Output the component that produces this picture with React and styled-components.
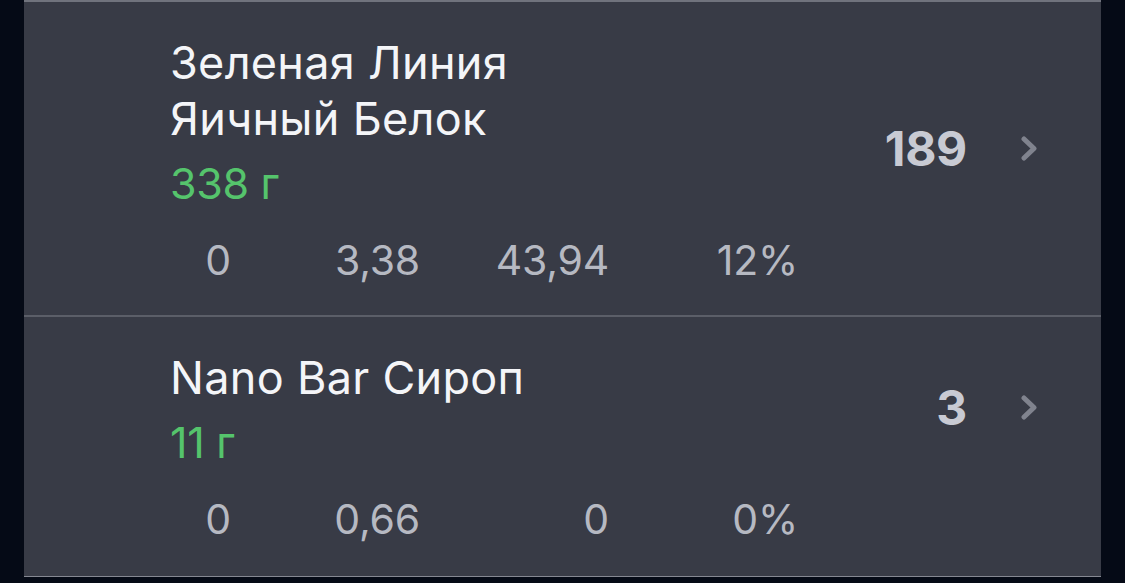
import React from "react";
import styled, { createGlobalStyle } from "styled-components";

const GlobalStyle = createGlobalStyle`
   html, body {
      margin: 0;
      padding: 0;
      background: #050a16;
   }
   body {
      font-family: Inter, "Noto Sans", "Liberation Sans", sans-serif;
      -webkit-font-smoothing: antialiased;
   }
`;

const Page = styled.div`
   width: 1125px;
   height: 583px;
   overflow: hidden;
   background: #050a16;
   padding: 0 24px;
   box-sizing: border-box;
`;

const List = styled.div`
   background: #383b46;
   border-top: 2px solid #70737d;
   border-bottom: 1px solid #858892;
`;

const Row = styled.div`
   display: flex;
   flex-direction: column;
   padding: 33px 0 ${(props) => props.bottom}px;
   & + & {
      border-top: 2px solid #5b5e68;
   }
`;

const Top = styled.div`
   display: flex;
   align-items: flex-end;
   padding: 0 63px 0 146px;
`;

const Info = styled.div`
   flex: 1;
   display: flex;
   flex-direction: column;
`;

const Title = styled.div`
   font-size: 45px;
   line-height: 56px;
   color: #f4f5f8;
   letter-spacing: 0.3px;
`;

const Weight = styled.div`
   margin-top: 8px;
   font-size: 43px;
   line-height: 56px;
   color: #55c46c;
   letter-spacing: -0.3px;
`;

const Value = styled.div`
   height: 120px;
   display: flex;
   align-items: center;
   gap: 54px;
   padding-bottom: 6px;
   box-sizing: border-box;
`;

const Amount = styled.span`
   font-size: 48px;
   font-weight: 700;
   color: #c8cad3;
   letter-spacing: -0.3px;
`;

const Stats = styled.div`
   display: grid;
   grid-template-columns: repeat(4, 189px);
   margin-top: 21px;
   padding-left: 18px;
`;

const Stat = styled.span`
   text-align: right;
   font-size: 41px;
   line-height: 56px;
   color: #b6b9c2;
   letter-spacing: -0.2px;
`;

const Chevron = () => (
   <svg width="17" height="25" viewBox="0 0 17 25">
      <polyline
         points="3,3 13,12.5 3,22"
         fill="none"
         stroke="#80838e"
         strokeWidth="5"
         strokeLinecap="round"
         strokeLinejoin="round"
      />
   </svg>
);

const items = [
   {
      title: ["Зеленая Линия", "Яичный Белок"],
      weight: "338 г",
      amount: "189",
      stats: ["0", "3,38", "43,94", "12%"],
      bottom: 27,
   },
   {
      title: ["Nano Bar Сироп"],
      weight: "11 г",
      amount: "3",
      stats: ["0", "0,66", "0", "0%"],
      bottom: 29,
   },
];

const App = () => (
   <Page>
      <GlobalStyle />
      <List>
         {items.map((item) => (
            <Row key={item.amount} bottom={item.bottom}>
               <Top>
                  <Info>
                     {item.title.map((line) => (
                        <Title key={line}>{line}</Title>
                     ))}
                     <Weight>{item.weight}</Weight>
                  </Info>
                  <Value>
                     <Amount>{item.amount}</Amount>
                     <Chevron />
                  </Value>
               </Top>
               <Stats>
                  {item.stats.map((s, i) => (
                     <Stat key={i}>{s}</Stat>
                  ))}
               </Stats>
            </Row>
         ))}
      </List>
   </Page>
);

export default App;
